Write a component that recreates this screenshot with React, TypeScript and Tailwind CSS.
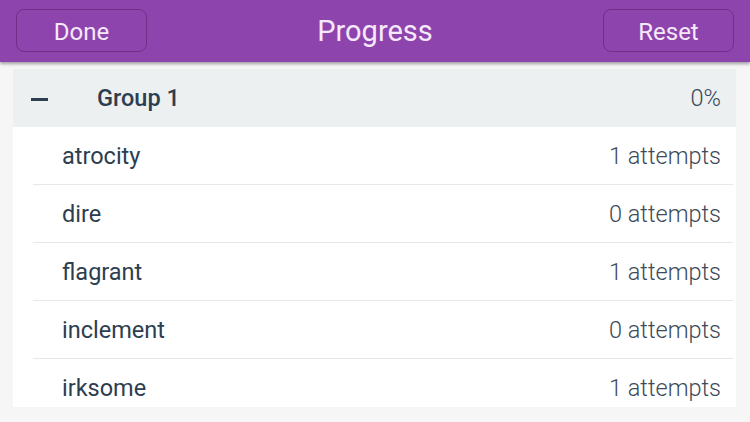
import React from 'react';

interface WordRow {
  word: string;
  attempts: number;
}

const rows: WordRow[] = [
  { word: 'atrocity', attempts: 1 },
  { word: 'dire', attempts: 0 },
  { word: 'flagrant', attempts: 1 },
  { word: 'inclement', attempts: 0 },
  { word: 'irksome', attempts: 1 },
];

const HeaderButton: React.FC<{ label: string }> = ({ label }) => (
  <button className="w-[131px] h-[43px] rounded-[8px] border border-[#6f2f8a] text-[24px] text-[#f6e9fb] leading-none pt-[2px]">
    {label}
  </button>
);

export default function App() {
  return (
    <div className="w-[750px] h-[422px] overflow-hidden bg-[#f6f6f6] font-['Roboto',sans-serif]">
      <header className="relative z-10 h-[62px] bg-[#8e44ad] flex items-center justify-between pl-[16px] pr-[16px] pb-[1px] shadow-[0_2px_3px_rgba(0,0,0,0.35)]">
        <HeaderButton label="Done" />
        <h1 className="text-[29px] text-[#f6e9fb] leading-none pt-[2px]">Progress</h1>
        <HeaderButton label="Reset" />
      </header>

      <div className="ml-[13px] mr-[14px] mt-[7px] h-[338px] overflow-hidden bg-white">
        <div className="h-[58px] bg-[#ecf0f1] flex items-center text-[#2c3e50] pt-[2px]">
          <span className="ml-[18px] w-[17px] h-[3px] bg-[#2c3e50]" />
          <span className="ml-[49px] text-[23.5px] font-medium">Group 1</span>
          <span className="ml-auto mr-[15px] text-[23.5px] font-light text-[#34495e]">0%</span>
        </div>
        {rows.map((row, idx) => (
          <div
            key={row.word}
            className={`ml-[20px] mr-[3px] h-[58px] shrink-0 flex items-center pt-[2px] ${idx < rows.length - 1 ? 'border-b border-[#e6e8ea]' : ''}`}
          >
            <span className="ml-[29px] text-[23.5px] text-[#2c3e50]">{row.word}</span>
            <span className="ml-auto mr-[12px] text-[23.5px] font-light text-[#3d4a57]">
              {row.attempts} attempts
            </span>
          </div>
        ))}
      </div>
    </div>
  );
}
